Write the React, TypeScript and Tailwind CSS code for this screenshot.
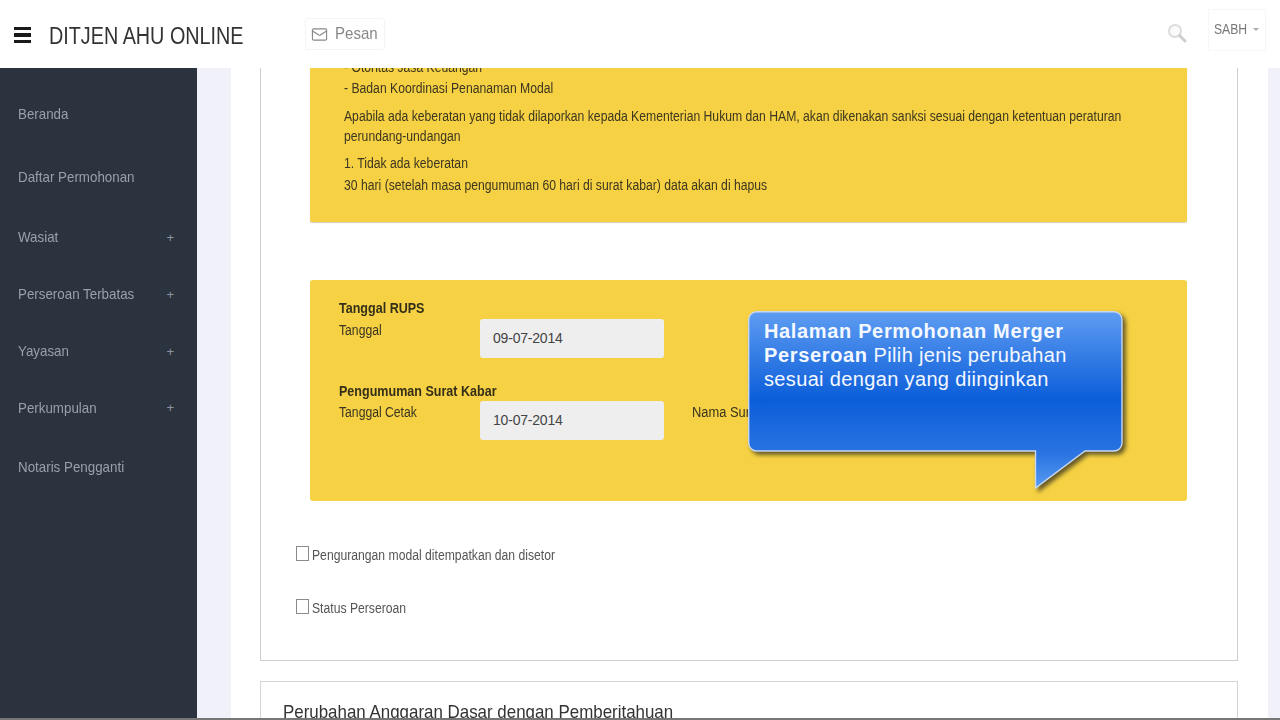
import React from "react";
import { Mail } from "lucide-react";

const nav = [
  { t: "Beranda", h: "h-[62px]", plus: false },
  { t: "Daftar Permohonan", h: "h-[64px]", plus: false },
  { t: "Wasiat", h: "h-[57px]", plus: true },
  { t: "Perseroan Terbatas", h: "h-[57px]", plus: true },
  { t: "Yayasan", h: "h-[57px]", plus: true },
  { t: "Perkumpulan", h: "h-[56px]", plus: true },
  { t: "Notaris Pengganti", h: "h-[62px]", plus: false },
];

function Field({ label, value }: { label: string; value: string }) {
  return (
    <div className="flex">
      <div className="w-[141px] text-[14px] leading-[20px] text-[#3a3420]">
        <span className="inline-block whitespace-nowrap origin-left scale-x-[0.87]">{label}</span>
      </div>
      <div className="w-[184px] h-[39px] mt-[-1px] rounded-[3px] bg-[#eeeeee] pl-[13px] flex items-center text-[14px] tracking-[-0.2px] text-[#444444]">
        {value}
      </div>
    </div>
  );
}

function Check({ label, mt }: { label: string; mt: string }) {
  return (
    <div className={`flex items-start ml-[35px] ${mt}`}>
      <div className="w-[13px] h-[15px] border border-[#8a8a8a] bg-white mt-[1px] mr-[3px]" />
      <span className="inline-block whitespace-nowrap origin-left scale-x-[0.87] text-[14px] leading-[20px] text-[#555555]">{label}</span>
    </div>
  );
}

function Callout() {
  return (
    <div className="absolute left-[748px] top-[311px] w-[380px] h-[182px] z-10">
      <svg
        width="380"
        height="182"
        viewBox="0 0 380 182"
        className="absolute left-0 top-0 drop-shadow-[3px_3px_2px_rgba(50,45,30,0.75)]"
      >
        <defs>
          <linearGradient id="cg" x1="0" y1="0" x2="0" y2="178" gradientUnits="userSpaceOnUse">
            <stop offset="0" stopColor="#5f9df2" />
            <stop offset="0.5" stopColor="#0b5dd9" />
            <stop offset="0.8" stopColor="#2a74e2" />
            <stop offset="1" stopColor="#5a9cf2" />
          </linearGradient>
        </defs>
        <path
          d="M8.7 0.7H366a8 8 0 0 1 8 8V132a8 8 0 0 1-8 8H337L287.5 177V140H8.7a8 8 0 0 1-8-8V8.7a8 8 0 0 1 8-8Z"
          fill="url(#cg)"
          stroke="#c9d8ef"
          strokeWidth="1.4"
        />
      </svg>
      <div className="absolute left-[16px] top-[8px] w-[345px] text-[20px] leading-[24px] tracking-[0.35px] text-[#f4f8ff]">
        <b className="tracking-[0.65px]">Halaman Permohonan Merger Perseroan</b> Pilih jenis perubahan sesuai dengan yang diinginkan
      </div>
    </div>
  );
}

export default function App() {
  return (
    <div className="relative w-[1280px] h-[720px] overflow-hidden bg-white font-['Liberation_Sans',sans-serif]">
      <header className="relative z-20 h-[68px] bg-white flex items-center">
        <div className="ml-[14px] mt-[2px] w-[17px] flex flex-col gap-[3px]">
          <div className="h-[3.5px] bg-[#1a1a1a]" />
          <div className="h-[3.5px] bg-[#1a1a1a]" />
          <div className="h-[3.5px] bg-[#1a1a1a]" />
        </div>
        <div className="ml-[18px] mt-[4px] w-[256px] text-[23px] text-[#333333]">
          <span className="inline-block whitespace-nowrap origin-left scale-x-[0.86]">DITJEN AHU ONLINE</span>
        </div>
        <div className="h-[32px] w-[80px] border border-[#f4f4f4] rounded-[3px] flex items-center pl-[5px] gap-[7px] text-[#888888]">
          <Mail size={17} strokeWidth={1.6} />
          <span className="inline-block origin-left scale-x-[0.887] text-[17px]">Pesan</span>
        </div>
        <div className="ml-auto flex items-center">
          <svg width="20" height="20" viewBox="0 0 20 20" className="mr-[21px] mt-[-3px]">
            <circle cx="8" cy="8" r="6" fill="#fafafa" stroke="#dcdcdc" strokeWidth="2" />
            <path d="M12.5 12.5L18 18" stroke="#cfcfcf" strokeWidth="3" strokeLinecap="round" />
          </svg>
          <div className="w-[58px] h-[42px] mt-[-9px] mr-[14px] border border-[#f7f7f7] flex items-center pl-[5px] text-[14px] text-[#777777]">
            <span className="inline-block origin-left scale-x-[0.87]">SABH</span>
            <span className="ml-[1px] w-0 h-0 border-x-[3px] border-x-transparent border-t-[3px] border-t-[#aaaaaa]" />
          </div>
        </div>
      </header>

      <div className="flex h-[652px]">
        <aside className="w-[197px] shrink-0 bg-[#2b333e] pt-[15px]">
          {nav.map((n) => (
            <div key={n.t} className={`${n.h} flex items-center pl-[18px] pr-[23px] justify-between text-[15px] text-[#98a0ab]`}>
              <span className="inline-block whitespace-nowrap origin-left scale-x-[0.89]">{n.t}</span>
              {n.plus && <span className="text-[13px] text-[#8b93a0]">+</span>}
            </div>
          ))}
        </aside>

        <div className="w-[34px] shrink-0 bg-[#f1f2f9]" />

        <main className="w-[1037px] shrink-0 bg-white overflow-hidden">
          <div className="ml-[29px] w-[978px] h-[593px] border-x border-b border-[#cfcfcf]">
            <div className="ml-[49px] w-[877px] h-[154px] flow-root rounded-b-[2px] bg-[#f5d143] pl-[34px] shadow-[0_1px_1px_rgba(150,130,50,0.4)]">
              <div className="w-[960px] origin-left scale-x-[0.87] text-[14px] leading-[22px] text-[#3d3620]">
                <div className="mt-[-11px] leading-[20px]">- Otoritas Jasa Keuangan</div>
                <div>- Badan Koordinasi Penanaman Modal</div>
                <div className="mt-[7px] leading-[20px]">
                  Apabila ada keberatan yang tidak dilaporkan kepada Kementerian Hukum dan HAM, akan dikenakan sanksi sesuai dengan ketentuan peraturan perundang-undangan
                </div>
                <div className="mt-[6px]">1. Tidak ada keberatan</div>
                <div>30 hari (setelah masa pengumuman 60 hari di surat kabar) data akan di hapus</div>
              </div>
            </div>

            <div className="ml-[49px] mt-[58px] w-[877px] h-[221px] rounded-[3px] bg-[#f5d143] pl-[29px] pt-[18px]">
              <div className="origin-left scale-x-[0.865] whitespace-nowrap text-[14.5px] font-bold leading-[20px] text-[#352f1a]">Tanggal RUPS</div>
              <div className="mt-[2px]"><Field label="Tanggal" value="09-07-2014" /></div>
              <div className="mt-[23px] origin-left scale-x-[0.865] whitespace-nowrap text-[14.5px] font-bold leading-[20px] text-[#352f1a]">Pengumuman Surat Kabar</div>
              <div className="flex mt-[1px]">
                <Field label="Tanggal Cetak" value="10-07-2014" />
                <div className="ml-[28px] text-[14px] leading-[20px] text-[#3a3420]">
                  <span className="inline-block whitespace-nowrap origin-left scale-x-[0.92]">Nama Surat Kabar</span>
                </div>
              </div>
            </div>

            <Check label="Pengurangan modal ditempatkan dan disetor" mt="mt-[44px]" />
            <Check label="Status Perseroan" mt="mt-[33px]" />
          </div>

          <div className="ml-[29px] mt-[20px] w-[978px] h-[60px] border border-[#d4d4d4] pl-[22px] pt-[19px] text-[19px] leading-[22px] text-[#333333]">
            <span className="inline-block whitespace-nowrap origin-left scale-x-[0.89]">Perubahan Anggaran Dasar dengan Pemberitahuan</span>
          </div>
        </main>

        <div className="flex-1 bg-[#f1f2f9]" />
      </div>

      <Callout />
      <div className="absolute left-0 bottom-0 w-full h-[2px] bg-[#777777] z-30" />
    </div>
  );
}
